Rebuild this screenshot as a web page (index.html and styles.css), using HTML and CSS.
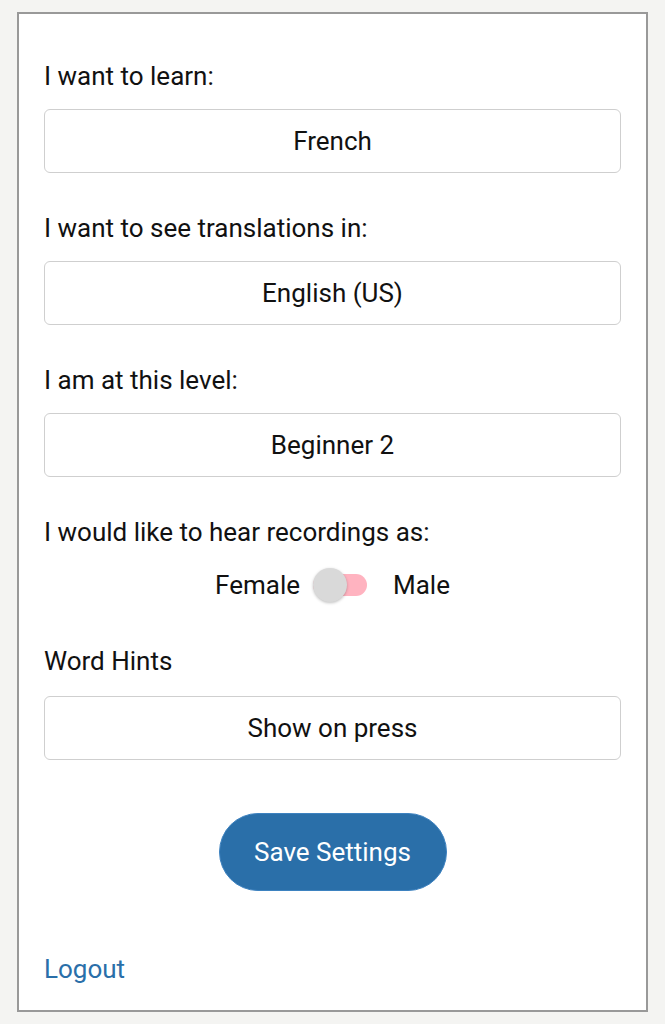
FILE: index.html
```html
<!DOCTYPE html>
<html lang="en">
<head>
<meta charset="utf-8">
<title>Settings</title>
<link rel="stylesheet" href="styles.css">
</head>
<body>
<div class="card">
  <div class="group">
    <div class="label">I want to learn:</div>
    <div class="select">French</div>
  </div>
  <div class="group">
    <div class="label">I want to see translations in:</div>
    <div class="select">English (US)</div>
  </div>
  <div class="group">
    <div class="label">I am at this level:</div>
    <div class="select">Beginner 2</div>
  </div>
  <div class="group-voice">
    <div class="label">I would like to hear recordings as:</div>
    <div class="toggle-row">
      <span class="opt">Female</span>
      <span class="switch"><span class="track"></span><span class="knob"></span></span>
      <span class="opt">Male</span>
    </div>
  </div>
  <div class="group hints">
    <div class="label">Word Hints</div>
    <div class="select">Show on press</div>
  </div>
  <div class="actions">
    <button class="save">Save Settings</button>
  </div>
  <a class="logout" href="#">Logout</a>
</div>
</body>
</html>
```

FILE: styles.css
```css
* { box-sizing: border-box; }
html, body { margin: 0; padding: 0; }
body {
  background: #f4f4f2;
  font-family: Roboto, "Liberation Sans", Arial, sans-serif;
  color: #111;
  padding: 12px 17px;
}
.card {
  height: 1000px;
  background: #fff;
  border: 2px solid #999;
  padding: 47px 25px 26px 25px;
  display: flex;
  flex-direction: column;
}
.label {
  font-size: 26px;
  line-height: 30px;
  margin-bottom: 18px;
}
.group { margin-bottom: 40px; }
.select {
  height: 64px;
  border: 1px solid #cfcfcf;
  border-radius: 6px;
  display: flex;
  align-items: center;
  justify-content: center;
  font-size: 26px;
}
.group-voice { margin-bottom: 43px; }
.group-voice .label { margin-bottom: 20px; }
.toggle-row {
  display: flex;
  align-items: center;
  justify-content: center;
  height: 36px;
  font-size: 26px;
}
.switch {
  position: relative;
  width: 54px;
  height: 36px;
  margin: 0 26px 0 13px;
}
.track {
  position: absolute;
  left: 0;
  top: 7px;
  width: 54px;
  height: 22px;
  border-radius: 11px;
  background: #ffb3c0;
}
.knob {
  position: absolute;
  left: 0;
  top: 1px;
  width: 34px;
  height: 34px;
  border-radius: 50%;
  background: #d9d9d9;
  box-shadow: 0 1px 3px rgba(0,0,0,0.25);
}
.hints { margin-bottom: 53px; }
.hints .label { margin-bottom: 20px; }
.actions { display: flex; justify-content: center; }
.save {
  width: 228px;
  height: 78px;
  border-radius: 39px;
  border: 1px solid #3d82c0;
  background: #2a6fa9;
  color: #fff;
  font-family: Roboto, "Liberation Sans", Arial, sans-serif;
  font-size: 26px;
}
.logout {
  margin-top: auto;
  font-size: 26px;
  line-height: 30px;
  color: #2a6fa9;
  text-decoration: none;
  align-self: flex-start;
}
```
